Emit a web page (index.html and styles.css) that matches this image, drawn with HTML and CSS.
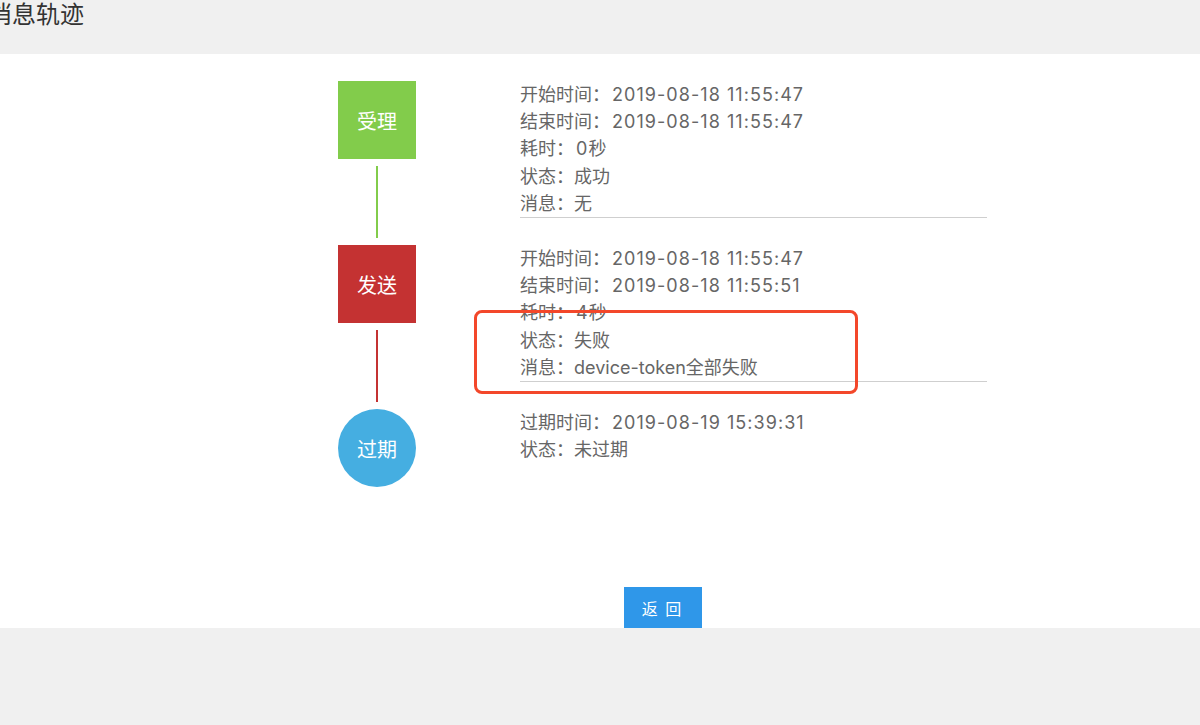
FILE: index.html
```html
<!DOCTYPE html>
<html lang="zh-CN">
<head>
<meta charset="utf-8">
<title>消息轨迹</title>
<link rel="stylesheet" href="styles.css">
</head>
<body>
<header class="page-header">
  <h1 class="page-title">消息轨迹</h1>
</header>
<main class="page-body">
  <div class="track">
    <section class="step">
      <div class="marker">
        <div class="node node-green">受理</div>
        <div class="connector connector-green"></div>
      </div>
      <div class="info info-ruled">
        <p>开始时间：<span class="num">2019-08-18 11:55:47</span></p>
        <p>结束时间：<span class="num">2019-08-18 11:55:47</span></p>
        <p>耗时：<span class="num">0</span>秒</p>
        <p>状态：成功</p>
        <p>消息：无</p>
      </div>
    </section>
    <section class="step">
      <div class="marker">
        <div class="node node-red">发送</div>
        <div class="connector connector-red"></div>
      </div>
      <div class="info info-ruled">
        <p>开始时间：<span class="num">2019-08-18 11:55:47</span></p>
        <p>结束时间：<span class="num">2019-08-18 11:55:51</span></p>
        <p>耗时：<span class="num">4</span>秒</p>
        <p>状态：失败</p>
        <p>消息：device-token全部失败</p>
        <div class="highlight"></div>
      </div>
    </section>
    <section class="step">
      <div class="marker">
        <div class="node node-blue">过期</div>
      </div>
      <div class="info">
        <p>过期时间：<span class="num">2019-08-19 15:39:31</span></p>
        <p>状态：未过期</p>
      </div>
    </section>
    <div class="actions">
      <button class="btn-back" type="button">返 回</button>
    </div>
  </div>
</main>
<footer class="page-footer"></footer>
</body>
</html>
```

FILE: styles.css
```css
html, body {
  margin: 0;
  padding: 0;
}
body {
  background: #f0f0f0;
  font-family: Inter, "Liberation Sans", "Noto Sans CJK SC", sans-serif;
  color: #666;
  width: 1200px;
  height: 725px;
  overflow: hidden;
}
.page-header {
  height: 54px;
  background: #f0f0f0;
}
.page-title {
  margin: 0 0 0 -12px;
  font-family: "Noto Sans CJK SC", sans-serif;
  font-weight: 400;
  font-size: 24px;
  line-height: 26px;
  color: #333;
}
.page-body {
  background: #fff;
  height: 574px;
  box-sizing: border-box;
  padding: 27px 0 0 338px;
}
.track {
  width: 649px;
  display: flex;
  flex-direction: column;
}
.step {
  display: flex;
  align-items: flex-start;
}
.marker {
  width: 78px;
  display: flex;
  flex-direction: column;
  align-items: center;
}
.node {
  width: 78px;
  height: 78px;
  display: flex;
  align-items: center;
  justify-content: center;
  color: #fff;
  font-family: "Noto Sans CJK SC", sans-serif;
  font-size: 20px;
  font-weight: 400;
}
.node-green { background: #82cc4b; }
.node-red { background: #c43232; }
.node-blue { background: #45aee1; border-radius: 50%; }
.connector {
  width: 2px;
  height: 72px;
  margin: 7px 0;
}
.connector-green { background: #82cc4b; }
.connector-red { background: #c43232; }
.info {
  position: relative;
  margin-left: 104px;
  width: 467px;
  font-size: 18px;
  line-height: 27.2px;
}
.info p {
  margin: 0;
  white-space: nowrap;
}
.num {
  letter-spacing: 1.05px;
  padding-left: 2px;
}
.info-ruled {
  border-bottom: 1px solid #cfcfcf;
}
.highlight {
  position: absolute;
  left: -46px;
  top: 65px;
  width: 384px;
  height: 84px;
  box-sizing: border-box;
  border: 3px solid #f3472a;
  border-radius: 8px;
}
.actions {
  display: flex;
  justify-content: center;
  margin-top: 100px;
}
.btn-back {
  width: 78px;
  height: 41px;
  border: none;
  background: #2f97e9;
  color: #fff;
  font-family: "Noto Sans CJK SC", sans-serif;
  font-size: 16px;
  letter-spacing: 2px;
  padding: 0;
}
.page-footer {
  height: 97px;
  background: #f0f0f0;
}
```
